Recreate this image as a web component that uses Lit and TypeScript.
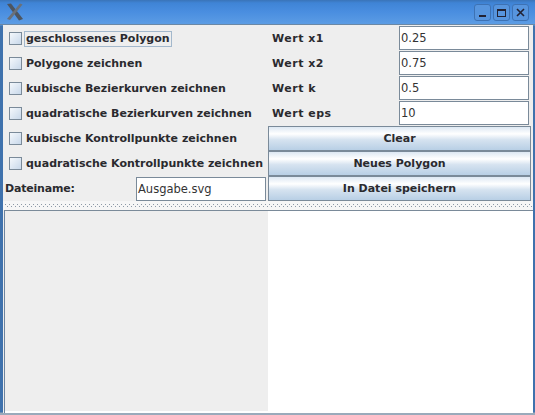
import { LitElement, html, css } from "lit";
import { customElement } from "lit/decorators.js";

@customElement("app-root")
export class AppRoot extends LitElement {
  static styles = css`
    :host { display: block; width: 535px; height: 415px; }
    .win { width: 535px; height: 415px; box-sizing: border-box; display: flex; flex-direction: column; background: linear-gradient(#4a8cd8 0, #5a9be2 25px, #3f72ad 26px, #3f72ad 412px, #9aaabb 413px); font-family: "DejaVu Sans", sans-serif; color: #2a2a2e; overflow: hidden; }
    .title { height: 25px; flex: none; display: flex; align-items: center; justify-content: space-between; padding: 0 6px 0 6px; box-sizing: border-box; background: linear-gradient(#3a74b8 0, #3f84d6 3px, #4a8ee0 12px, #5c9ce4 100%); border-bottom: 1px solid #6b88a5; }
    .logo { width: 18px; height: 18px; }
    .wbtns { display: flex; gap: 2px; }
    .wb { width: 17px; height: 17px; border-radius: 3px; border: 1px solid #3d72b4; box-sizing: border-box; background: #5795de; display: flex; align-items: center; justify-content: center; }
    .wb svg { width: 11px; height: 11px; }
    .body { flex: 1; margin: 0 2px 2px 3px; background: #eeeeee; display: flex; flex-direction: column; min-height: 0; }
    .form { display: grid; grid-template-columns: 265px 131px 133px; grid-auto-rows: 25px; height: 176px; flex: none; padding-top: 1px; box-sizing: border-box; }
    .cb { display: flex; align-items: center; gap: 2px; padding-left: 6px; font-size: 11px; font-weight: 700; white-space: nowrap; }
    .box { width: 13px; height: 13px; box-sizing: border-box; border: 1px solid #7a8a99; background: linear-gradient(135deg, #f4f8fc, #c8d8ea); flex: none; }
    .cb span { padding: 0 1px; border: 1px solid transparent; line-height: 14px; }
    .cb span.focus { border-color: #a3b8cc; }
    .lbl { display: flex; align-items: center; padding-left: 4px; font-size: 11px; font-weight: 700; letter-spacing: 0.5px; }
    .inp { display: flex; align-items: center; box-sizing: border-box; height: 24px; width: 130px; border: 1px solid #7a8a99; background: #fff; font-size: 11.5px; padding-left: 1px; color: #333; }
    .btn { grid-column: 2 / 4; display: flex; align-items: center; justify-content: center; height: 25px; box-sizing: border-box; border: 1px solid #7a8a99; font-size: 11px; font-weight: 700; background: linear-gradient(#dde8f3 0, #ffffff 30%, #d6e3f0 55%, #b8cfe5 100%); margin-right: 1px; }
    .file { display: grid; grid-template-columns: 133px 132px; align-items: center; }
    .file .name { font-size: 11px; font-weight: 700; padding-left: 2px; letter-spacing: -0.2px; }
    .divider { height: 9px; flex: none; display: flex; align-items: center; background: #f6f6f6; }
    .dots { height: 4px; flex: 1; margin: 1px 0 0 2px; background-image: radial-gradient(circle at 0.5px 0.5px, #8c98a6 0.8px, transparent 0.8px), radial-gradient(circle at 0.5px 0.5px, #8c98a6 0.8px, transparent 0.8px); background-size: 4px 4px; background-position: 0 0, 2px 2px; }
    .split { flex: 1; min-height: 0; display: flex; background: #fff; margin-left: 1px; border-left: 1px solid #6c84a0; border-top: 1px solid #7a8a99; padding-bottom: 2px; }
    .left { width: 263px; background: #eeeeee; }
    .right { flex: 1; background: #fff; }
  `;

  render() {
    const rows: [string, string, string, boolean][] = [
      ["geschlossenes Polygon", "Wert x1", "0.25", true],
      ["Polygone zeichnen", "Wert x2", "0.75", false],
      ["kubische Bezierkurven zeichnen", "Wert k", "0.5", false],
      ["quadratische Bezierkurven zeichnen", "Wert eps", "10", false],
    ];
    return html`<div class="win">
      <div class="title">
        <svg class="logo" viewBox="0 0 18 18"><path d="M1 1 L5 0.5 L17 16 L13 17.5 Z" fill="#4d5560"/><path d="M14 0.5 L16.5 1.5 L4 17 L1 16 Z" fill="#6a7078"/></svg>
        <div class="wbtns">
          <div class="wb"><svg viewBox="0 0 11 11"><rect x="2" y="8" width="7" height="2" fill="#223"/></svg></div>
          <div class="wb"><svg viewBox="0 0 11 11"><rect x="1.5" y="2.5" width="8" height="7" fill="none" stroke="#223" stroke-width="1"/><rect x="1.5" y="2" width="8" height="2" fill="#223"/></svg></div>
          <div class="wb"><svg viewBox="0 0 11 11"><path d="M2 2 L9 9 M9 2 L2 9" stroke="#223" stroke-width="1.6"/></svg></div>
        </div>
      </div>
      <div class="body">
        <div class="form">
          ${rows.map(
            (r) => html`<div class="cb"><div class="box"></div><span class=${r[3] ? "focus" : ""}>${r[0]}</span></div>
              <div class="lbl">${r[1]}</div>
              <div class="inp">${r[2]}</div>`
          )}
          <div class="cb"><div class="box"></div><span>kubische Kontrollpunkte zeichnen</span></div>
          <div class="btn">Clear</div>
          <div class="cb"><div class="box"></div><span>quadratische Kontrollpunkte zeichnen</span></div>
          <div class="btn">Neues Polygon</div>
          <div class="file"><div class="name">Dateiname:</div><div class="inp">Ausgabe.svg</div></div>
          <div class="btn">In Datei speichern</div>
        </div>
        <div class="divider"><div class="dots"></div></div>
        <div class="split"><div class="left"></div><div class="right"></div></div>
      </div>
    </div>`;
  }
}
